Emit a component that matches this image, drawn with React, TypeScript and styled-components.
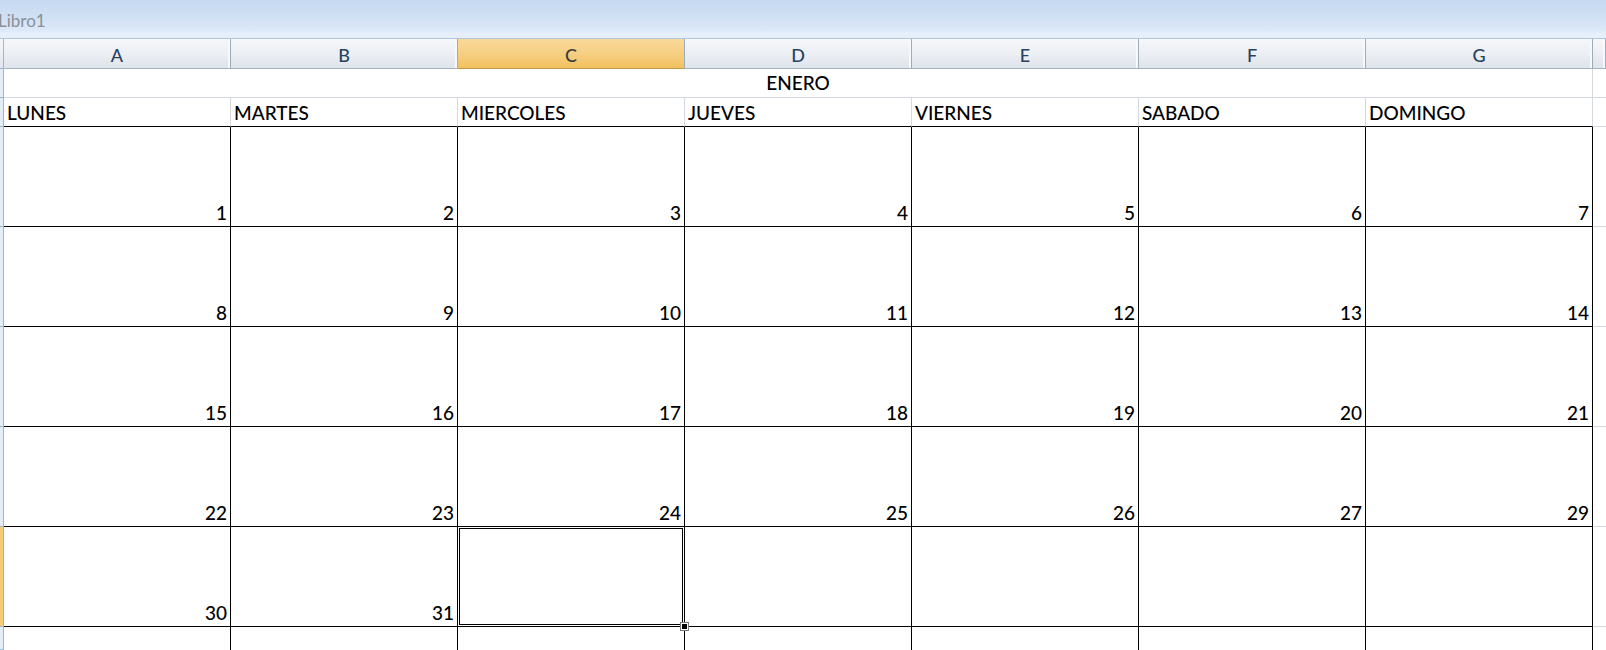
import React from "react";
import styled, { createGlobalStyle, css } from "styled-components";

const Global = createGlobalStyle`
  html, body { margin: 0; padding: 0; background: #ffffff; overflow: hidden; }
  body { font-family: Lato, "Open Sans", "Liberation Sans", sans-serif; }
  * { box-sizing: border-box; }
`;

const Window = styled.div`
  width: 1606px;
  height: 650px;
  display: flex;
  flex-direction: column;
  overflow: hidden;
  background: #ffffff;
`;

const TitleBar = styled.div`
  height: 39px;
  flex: 0 0 39px;
  display: flex;
  align-items: flex-end;
  padding: 0 0 9px 0;
  margin-left: -2px;
  background: linear-gradient(to bottom, #c6d9f1 0%, #d3e2f5 55%, #dde9f8 80%, #e6eefa 88%, #e6eefa 95%);
  border-bottom: 1px solid #b2c6dd;
  color: #8b9096;
  font-size: 17px;
  line-height: 1;
`;

const Sheet = styled.div`
  flex: 1 1 auto;
  display: grid;
  grid-template-columns: 4px repeat(7, 227px) 1fr;
  grid-template-rows: 30px 29px 29px repeat(5, 100px) 1fr;
  font-size: 19px;
  font-weight: 500;
  color: #000;
  line-height: 1;
`;

const headerBg = css`
  background: linear-gradient(to bottom, #f5f7fa 0%, #eceff4 50%, #dfe4eb 100%);
`;

const Corner = styled.div`
  ${headerBg};
  border-right: 1px solid #9eb6ce;
  border-bottom: 1px solid #9eb6ce;
`;

const ColHeader = styled.div<{ $selected?: boolean }>`
  ${headerBg};
  display: flex;
  align-items: center;
  justify-content: center;
  padding-top: 2px;
  color: #27415f;
  font-size: 18px;
  border-right: 1px solid #9eabb8;
  border-bottom: 1px solid #a7b4c2;
  box-shadow: inset -2px 0 0 #f7f9fb;
  ${(p) =>
    p.$selected &&
    css`
      background: linear-gradient(to bottom, #f9d99a 0%, #f6cf83 50%, #f1c15f 100%);
      border-bottom-color: #c29b4a;
      box-shadow: none;
      color: #3b3b3b;
    `}
`;

const RowHead = styled.div<{ $selected?: boolean }>`
  background: ${(p) => (p.$selected ? "#f8cb79" : "#e4ecf7")};
  border-right: 1px solid ${(p) => (p.$selected ? "#e0a94f" : "#9eb6ce")};
  border-bottom: 1px solid #9eb6ce;
`;

const MonthCell = styled.div`
  grid-column: span 7;
  display: flex;
  align-items: flex-end;
  justify-content: center;
  padding-bottom: 5px;
  border-right: 1px solid #d4d9e0;
  border-bottom: 1px solid #d4d9e0;
`;

const BlankGrid = styled.div<{ $bottom?: string }>`
  border-bottom: 1px solid ${(p) => p.$bottom ?? "#d4d9e0"};
`;

const LabelCell = styled.div`
  display: flex;
  align-items: flex-end;
  padding: 0 0 4px 3px;
  border-right: 1px solid #d4d9e0;
  border-bottom: 1px solid #000;
`;

const DayCell = styled.div<{ $last?: boolean }>`
  position: relative;
  display: flex;
  align-items: flex-end;
  justify-content: flex-end;
  padding: 0 3px 4px 0;
  border-right: 1px solid #000;
  border-bottom: ${(p) => (p.$last ? "none" : "1px solid #000")};
`;

const Selection = styled.div`
  position: absolute;
  inset: 0;
  box-shadow: inset 0 0 0 1px #ffffff, inset 0 0 0 2px #000000;
  pointer-events: none;
`;

const FillHandle = styled.div`
  position: absolute;
  right: -4px;
  bottom: -4px;
  width: 7px;
  height: 7px;
  background: #000;
  border: 1px solid #ffffff;
  box-shadow: 0 0 0 1px #7a7a7a;
  z-index: 2;
`;

const columns = ["A", "B", "C", "D", "E", "F", "G"];
const days = ["LUNES", "MARTES", "MIERCOLES", "JUEVES", "VIERNES", "SABADO", "DOMINGO"];
const weeks: (string | null)[][] = [
  ["1", "2", "3", "4", "5", "6", "7"],
  ["8", "9", "10", "11", "12", "13", "14"],
  ["15", "16", "17", "18", "19", "20", "21"],
  ["22", "23", "24", "25", "26", "27", "29"],
  ["30", "31", null, null, null, null, null],
];

export default function App() {
  return (
    <>
      <Global />
      <Window>
        <TitleBar>Libro1</TitleBar>
        <Sheet>
          <Corner />
          {columns.map((c) => (
            <ColHeader key={c} $selected={c === "C"}>
              {c}
            </ColHeader>
          ))}
          <ColHeader />

          <RowHead />
          <MonthCell>ENERO</MonthCell>
          <BlankGrid />

          <RowHead />
          {days.map((d) => (
            <LabelCell key={d}>{d}</LabelCell>
          ))}
          <BlankGrid />

          {weeks.map((week, wi) => (
            <React.Fragment key={wi}>
              <RowHead $selected={wi === 4} />
              {week.map((n, di) => (
                <DayCell key={di}>
                  {n}
                  {wi === 4 && di === 2 && (
                    <>
                      <Selection />
                      <FillHandle />
                    </>
                  )}
                </DayCell>
              ))}
              <BlankGrid />
            </React.Fragment>
          ))}

          <RowHead />
          {columns.map((c) => (
            <DayCell key={c} $last />
          ))}
          <BlankGrid $bottom="transparent" />
        </Sheet>
      </Window>
    </>
  );
}
